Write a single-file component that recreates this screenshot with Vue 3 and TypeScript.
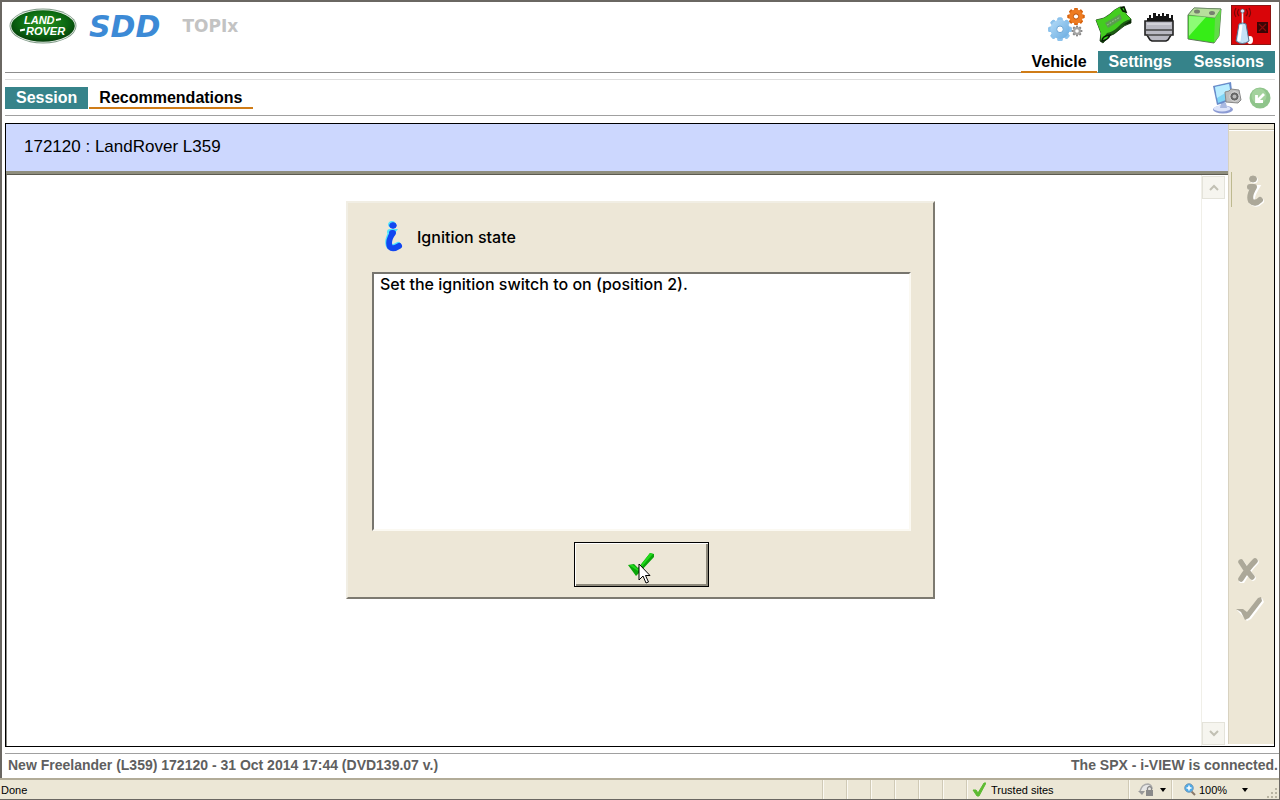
<script setup lang="ts">
import { ref } from 'vue'

interface Tab {
  label: string
  active: boolean
}

const mainTabs: Tab[] = [
  { label: 'Vehicle', active: true },
  { label: 'Settings', active: false },
  { label: 'Sessions', active: false },
]
const sessionTabs: Tab[] = [
  { label: 'Session', active: false },
  { label: 'Recommendations', active: true },
]

const dialogTitle = ref('Ignition state')
const dialogText = ref('Set the ignition switch to on (position 2).')
const emptyCells = 6
const gearTeeth = [0, 45, 90, 135, 180, 225, 270, 315]
</script>

<template>
  <div class="window">
    <header class="masthead">
      <div class="brand">
        <svg class="rover" viewBox="0 0 68 36" role="img" aria-label="Land Rover">
          <defs>
            <radialGradient id="oval" cx="50%" cy="40%" r="60%">
              <stop offset="0" stop-color="#2a9420" />
              <stop offset="0.6" stop-color="#0b6a12" />
              <stop offset="1" stop-color="#043f0a" />
            </radialGradient>
          </defs>
          <ellipse cx="34" cy="18" rx="33.5" ry="17.5" fill="#7f9a87" />
          <ellipse cx="34" cy="18" rx="32.6" ry="16.5" fill="#eef5ee" />
          <ellipse cx="34" cy="18" rx="31.8" ry="15.7" fill="url(#oval)" />
          <text x="15" y="16" class="rover-text">LAND</text>
          <text x="17" y="27" class="rover-text">ROVER</text>
          <path d="M47 12l5-1M11 22.5l5-1" stroke="#fff" stroke-width="1.8" />
        </svg>
        <span class="sdd">SDD</span>
        <a class="topix" href="#topix">TOPIx</a>
      </div>

      <div class="tools">
        <div class="tool-icons">
          <button class="tool gears" type="button" aria-label="Configuration">
            <svg viewBox="0 0 38 34">
              <defs>
                <linearGradient id="blueGear" x1="0" y1="0" x2="1" y2="1">
                  <stop offset="0" stop-color="#b5dcf8" /><stop offset="1" stop-color="#69abe0" />
                </linearGradient>
              </defs>
              <g fill="#8cc2ec">
                <rect v-for="a in gearTeeth" :key="a" x="9.4" y="9.5" width="5.2" height="23.5" rx="1.5" :transform="`rotate(${a} 12 21.3)`" />
              </g>
              <circle cx="12" cy="21.3" r="9.6" fill="url(#blueGear)" />
              <circle cx="12" cy="21.3" r="3.3" fill="#fff" stroke="#6ba7d8" />
              <g fill="#d8640f">
                <rect v-for="a in gearTeeth" :key="a" x="26.3" y="0" width="3.4" height="17" rx="0.8" :transform="`rotate(${a} 28 8.5)`" />
              </g>
              <circle cx="28" cy="8.5" r="6.9" fill="#ee7c22" />
              <circle cx="28" cy="8.5" r="2.6" fill="#fff" stroke="#bd5208" />
              <g fill="#8a8a8a">
                <rect v-for="a in gearTeeth" :key="a" x="28" y="17.8" width="2" height="10.4" :transform="`rotate(${a} 29 23)`" />
              </g>
              <circle cx="29" cy="23" r="3.9" fill="#a4a4a4" />
              <circle cx="29" cy="23" r="1.8" fill="#fff" />
            </svg>
          </button>
          <button class="tool module" type="button" aria-label="Vehicle communication module">
            <svg viewBox="0 0 37 38">
              <path d="M1 14q9-1 14-6 5-5 10-7l4 0 2 7 5 5v4q-7 2-12 7-5 5-10 6L8 37l-3-2 1-8z" fill="#1c5c12" stroke="#0b2c06" stroke-width="0.8" />
              <path d="M1 14q9-1 14-6 5-5 10-7l4 0 2 7 5 5q-8 2-13 8-5 5-11 6l-6 8 0-8z" fill="#43cd20" />
              <path d="M10 17l15-9 2 5-14 9z" fill="#5a9c50" />
              <path d="M12 19l13-8" stroke="#8fb488" stroke-width="1.2" stroke-dasharray="2 1" />
              <path d="M7 35q0-5 8-6-2 5-8 6zM26 2l3-1 2 5-3-1z" fill="#38d51c" stroke="#061b03" stroke-width="1.6" />
              <path d="M28 19l8-5v3z" fill="#0a2607" />
            </svg>
          </button>
          <button class="tool connector" type="button" aria-label="Diagnostic connector">
            <svg viewBox="0 0 30 29">
              <path d="M1 8h28v14h-2l-3 5-2 1H8l-2-1-3-5H1z" fill="#b9b9c2" stroke="#222" stroke-width="1.6" />
              <path d="M2 17h26M3 22h24" stroke="#444" stroke-width="1.3" />
              <path d="M3 8V5h2V2h2v3h2V0h3v3h2V1h2v2h2V0h2v3h2V1h3v4h2V2h2v6z" fill="#151515" />
              <path d="M3 11h24" stroke="#d2d2d8" stroke-width="2" />
            </svg>
          </button>
          <button class="tool battery" type="button" aria-label="Battery">
            <svg viewBox="0 0 35 37">
              <path d="M1 8L7 1l27 1-2 27-5 7L1 32z" fill="#36ed17" stroke="#5c7857" stroke-width="1" />
              <path d="M1 8L7 1l27 1-6 9z" fill="#b8df9c" stroke="#607860" stroke-width="0.6" />
              <path d="M28 11l6-9-2 27-5 7z" fill="#62dc48" />
              <path d="M2 9l17 1L2 29z" fill="#a3ff8d" opacity="0.8" />
              <ellipse cx="10" cy="4.5" rx="3" ry="2" fill="#77806f" />
              <ellipse cx="25" cy="6" rx="3" ry="2" fill="#77806f" />
            </svg>
          </button>
          <button class="tool radio" type="button" aria-label="Wireless link not connected">
            <svg viewBox="0 0 40 40">
              <rect width="40" height="40" fill="#d90509" />
              <rect x="0.5" y="0.5" width="39" height="39" fill="none" stroke="#8d1512" />
              <path d="M8 4q-3 4 0 7M15 4q3 4 0 7M5 3q-3 5 0 9M18 3q3 5 0 9" fill="none" stroke="#760909" stroke-width="1.2" />
              <path d="M11.500 7v12" stroke="#e5f4ff" stroke-width="1.600" />
              <circle cx="11.500" cy="6" r="2" fill="#d5ecff" stroke="#4d5060" stroke-width="0.6" />
              <ellipse cx="19" cy="35" rx="3" ry="4" fill="#fff" />
              <path d="M8 19q4-2 7 0l3 17q-7 5-13 0z" fill="#c5e2f7" stroke="#54738f" stroke-width="1" />
              <path d="M10 20l-2 16" stroke="#fff" stroke-width="3" />
              <rect x="26" y="17" width="11" height="11" fill="#3b0505" />
              <path d="M28 19l7 7M35 19l-7 7" stroke="#8b0b0b" stroke-width="1.2" />
            </svg>
          </button>
        </div>
        <nav class="tabs main-tabs" aria-label="Main">
          <a v-for="tab in mainTabs" :key="tab.label" href="#main" class="tab" :class="{ active: tab.active }">{{ tab.label }}</a>
        </nav>
      </div>
    </header>

    <div class="subbar">
      <nav class="tabs" aria-label="Session">
        <a v-for="tab in sessionTabs" :key="tab.label" href="#session" class="tab" :class="{ active: tab.active }">{{ tab.label }}</a>
      </nav>
      <div class="sub-actions">
        <button class="plain" type="button" aria-label="Capture screen">
          <svg width="30" height="32" viewBox="0 0 30 32">
            <ellipse cx="11" cy="27.500" rx="10" ry="4" fill="#8c9bd3" />
            <ellipse cx="10" cy="26.500" rx="8.500" ry="3" fill="#dde4fa" />
            <path d="M9 21h5l1 5H8z" fill="#a9b8e0" />
            <path d="M1 4L19 0l2 18-16 5z" fill="#6a8cca" />
            <path d="M3 5l14-3 2 14-13 5z" fill="#7fd5f6" />
            <path d="M3 5l14-3 1 6-13 8z" fill="#b9edff" />
            <path d="M13 10l4-1 2-2 8 1 2 10-3 3-12-1z" fill="#bdbdbd" stroke="#888" />
            <circle cx="22.500" cy="14.500" r="4.600" fill="#666" stroke="#e5e5e5" />
            <circle cx="22.500" cy="14.500" r="2" fill="#bbb" />
          </svg>
        </button>
        <button class="plain" type="button" aria-label="Minimise">
          <svg width="22" height="22" viewBox="0 0 22 22">
            <circle cx="11" cy="11" r="10.500" fill="#8fc48b" />
            <circle cx="10" cy="9" r="7.500" fill="#a3d29d" />
            <path d="M15 7L8 14M7.500 8v6.500H14" fill="none" stroke="#fff" stroke-width="2.800" />
          </svg>
        </button>
      </div>
    </div>

    <main class="panel">
      <section class="work">
        <h1 class="vehicle">172120 : LandRover L359</h1>
        <div class="canvas">
          <div class="scrollbar">
            <button class="scroll-btn" type="button" aria-label="Scroll up">
              <svg width="10" height="7" viewBox="0 0 10 7"><path d="M1 6l4-4 4 4" /></svg>
            </button>
            <button class="scroll-btn" type="button" aria-label="Scroll down">
              <svg width="10" height="7" viewBox="0 0 10 7"><path d="M1 1l4 4 4-4" /></svg>
            </button>
          </div>
        </div>
      </section>
      <aside class="side">
        <button class="plain side-info" type="button" aria-label="Information" disabled>
          <svg width="20" height="33" viewBox="0 0 20 33">
            <g transform="translate(1 1)" fill="#fff" stroke="#fff">
              <ellipse cx="7" cy="4" rx="3.500" ry="3" />
              <path d="M4 12h5C6 17 4 22 5 26q4 4 9-1" fill="none" stroke-width="6" stroke-linecap="round" />
            </g>
            <g fill="#aca899" stroke="#aca899">
              <ellipse cx="7" cy="4" rx="3.500" ry="3" />
              <path d="M4 12h4C5 17 3 22 5 26q4 4 9-1" fill="none" stroke-width="6" stroke-linecap="round" stroke-linejoin="round" />
            </g>
          </svg>
        </button>
        <div class="side-end">
          <button class="plain" type="button" aria-label="Cancel" disabled>
            <svg width="24" height="25" viewBox="0 0 24 25">
              <path d="M5 4q4 7 11 15M19 3Q12 10 5 22" transform="translate(1 1)" fill="none" stroke="#fff" stroke-width="5.500" stroke-linecap="round" />
              <path d="M5 4q4 7 11 15M19 3Q12 10 5 21" fill="none" stroke="#aca899" stroke-width="5.500" stroke-linecap="round" />
            </svg>
          </button>
          <button class="plain" type="button" aria-label="Confirm" disabled>
            <svg width="28" height="27" viewBox="0 0 28 27">
              <path d="M0 12h7l4 3L22 1l3-1 2 4-13 17-4 2z" transform="translate(1 1)" fill="#fff" />
              <path d="M0 12h7l4 3L22 1l3-1 1 4-13 17-4 2-4-8z" fill="#aca899" />
            </svg>
          </button>
        </div>
      </aside>
    </main>

    <footer class="session-info">
      <span>New Freelander (L359) 172120 - 31 Oct 2014 17:44 (DVD139.07 v.)</span>
      <span>The SPX - i-VIEW is connected.</span>
    </footer>

    <div class="statusbar">
      <span class="done">Done</span>
      <span v-for="n in emptyCells" :key="n" class="cell"></span>
      <span class="cell zone">
        <svg width="14" height="15" viewBox="0 0 14 15"><path d="M1 8l3 0 2 3L12 1l2 0L7 14H5z" fill="#5dbb32" stroke="#5dbb32" stroke-width="1" /></svg>
        Trusted sites
      </span>
      <button class="cell lock" type="button" aria-label="Protected mode">
        <svg width="17" height="14" viewBox="0 0 17 14">
          <path d="M2 8q2-7 8-7 4 1 4 5" fill="#e6e6e6" stroke="#aaa" stroke-width="1.500" />
          <path d="M0 8h7l-3 4z" fill="#999" />
          <rect x="8" y="7" width="7" height="6" fill="#8a8a8a" />
          <path d="M9.500 7V5q2-3 4 0v2" fill="none" stroke="#888" stroke-width="1.300" />
        </svg>
        <svg width="6" height="4" viewBox="0 0 6 4"><path d="M0 0h6L3 4z" /></svg>
      </button>
      <button class="cell zoom" type="button">
        <svg width="12" height="13" viewBox="0 0 12 13">
          <path d="M7 8l4 4" stroke="#8a7a6a" stroke-width="2" />
          <circle cx="5" cy="5" r="4.300" fill="#4cabe8" stroke="#7d9db8" />
          <path d="M5 2.500v5M2.500 5h5" stroke="#fff" stroke-width="1.500" />
        </svg>
        <span>100%</span>
        <svg class="arrow" width="6" height="4" viewBox="0 0 6 4"><path d="M0 0h6L3 4z" /></svg>
      </button>
      <svg class="grip" width="12" height="12" viewBox="0 0 12 12">
        <path d="M8 1h2v2H8zM4 5h2v2H4zM8 5h2v2H8zM0 9h2v2H0zM4 9h2v2H4zM8 9h2v2H8z" fill="#b8b4a2" />
      </svg>
    </div>

    <div class="dialog" role="dialog" aria-labelledby="dialog-title">
      <div class="dialog-head">
        <svg width="20" height="32" viewBox="0 0 20 32">
          <g transform="translate(-1 -1)" fill="#4de3ff" stroke="#4de3ff">
            <ellipse cx="9" cy="4.500" rx="3.500" ry="3" />
            <path d="M7 12h2C6 16 4 22 6 26q3 3 9-1" fill="none" stroke-width="6" stroke-linecap="round" />
          </g>
          <g fill="#1246f0" stroke="#1246f0">
            <ellipse cx="9" cy="4.500" rx="3.300" ry="2.800" />
            <path d="M8 12h1C6 16 4 22 6 26q3 3 9-1" fill="none" stroke-width="6" stroke-linecap="round" stroke-linejoin="round" />
          </g>
        </svg>
        <h2 id="dialog-title">{{ dialogTitle }}</h2>
      </div>
      <div class="message">{{ dialogText }}</div>
      <button class="confirm" type="button" aria-label="OK">
        <svg width="28" height="26" viewBox="0 0 28 26">
          <path d="M0 13l6-1 4 4L22 1l4 1v3L12 20 8 24z" fill="#0aa50a" />
          <path d="M1 13l4 0 5 4L22 1l3 1L10 19z" fill="#22d91c" />
        </svg>
        <svg class="pointer" width="13" height="21" viewBox="0 0 13 21">
          <path d="M1 1v16l4-4 3 7 2.500-1-3-6.500H12z" fill="#fff" stroke="#000" />
        </svg>
      </button>
    </div>
  </div>
</template>

<style>
body {
  margin: 0;
}
</style>

<style scoped>
.window {
  position: relative;
  box-sizing: border-box;
  display: flex;
  flex-direction: column;
  min-height: 100vh;
  border: solid #6a6762;
  border-width: 2px 1px 1px 2px;
  background: #fff;
  color: #000;
  font-family: "Liberation Sans", Arial, sans-serif;
}
button {
  font: inherit;
  color: inherit;
}
svg {
  display: block;
}
.plain,
.tool {
  padding: 0;
  border: 0;
  background: none;
}
.masthead {
  display: flex;
  justify-content: space-between;
  height: 70px;
  margin: 0 4px 0 3px;
  border-bottom: 1px solid #8e8e8e;
}
.brand {
  display: flex;
  align-items: flex-start;
  padding: 6px 0 0 4px;
}
.rover {
  width: 68px;
  height: 36px;
}
.rover-text {
  fill: #fff;
  font: italic bold 11px "Liberation Sans", Arial, sans-serif;
}
.sdd {
  margin: 2px 0 0 12px;
  color: #3c8ad6;
  font: italic bold 30px/34px "DejaVu Sans", Verdana, sans-serif;
}
.topix {
  margin: 8px 0 0 22px;
  color: #c3c3c3;
  font: bold 17px/20px "DejaVu Sans", Verdana, sans-serif;
  text-decoration: none;
}
.tools {
  display: flex;
  flex-direction: column;
  justify-content: space-between;
  align-items: flex-end;
}
.tool-icons {
  display: flex;
  align-items: center;
  padding: 3px 4px 0 0;
}
.gears { width: 38px; margin-right: 9px; }
.module { width: 37px; margin-right: 12px; }
.connector { width: 30px; margin-right: 13px; }
.battery { width: 35px; margin-right: 9px; }
.radio { width: 40px; }
.connector svg {
  margin-top: 4px;
}
.tabs {
  display: flex;
}
.tab {
  box-sizing: border-box;
  height: 22px;
  padding: 0 11px;
  background: #36838a;
  color: #fff;
  font-size: 16px;
  font-weight: bold;
  line-height: 21px;
  text-decoration: none;
}
.tab.active {
  margin-right: 1px;
  padding: 0 10px;
  border-bottom: 2px solid #cf7c17;
  background: #fff;
  color: #000;
}
.tab + .tab.active {
  margin-left: 1px;
}
.main-tabs {
  margin-bottom: -1px;
}
.subbar {
  display: flex;
  align-items: center;
  justify-content: space-between;
  box-sizing: border-box;
  height: 37px;
  margin: 6px 4px 7px 3px;
  padding-right: 4px;
  border: solid #a0a0a0;
  border-width: 1px 0;
  border-top-color: #dedede;
}
.sub-actions {
  display: flex;
  align-items: center;
  gap: 7px;
}
.panel {
  flex: 1;
  display: flex;
  margin: 0 4px 0 3px;
  border: 1px solid #000;
}
.work {
  flex: 1;
  display: flex;
  flex-direction: column;
}
.vehicle {
  box-sizing: border-box;
  height: 50px;
  margin: 0;
  padding: 0 18px;
  border-bottom: 3px solid #8f8e7e;
  background: #ccd7fe;
  font-size: 17px;
  font-weight: normal;
  line-height: 46px;
}
.canvas {
  flex: 1;
  display: flex;
  justify-content: flex-end;
  border-top: 1px solid #5c5b50;
  border-left: 1px solid #8c8c88;
}
.scrollbar {
  display: flex;
  flex-direction: column;
  justify-content: space-between;
  box-sizing: border-box;
  width: 27px;
  padding: 1px 3px 1px 0;
  border-left: 1px solid #f0efe8;
}
.scroll-btn {
  display: flex;
  align-items: center;
  justify-content: center;
  height: 23px;
  padding: 0;
  border: 1px solid #e4e3da;
  background: #f6f5ef;
}
.scroll-btn path {
  fill: none;
  stroke: #c2c0b4;
  stroke-width: 2;
}
.side {
  display: flex;
  flex-direction: column;
  align-items: flex-start;
  justify-content: space-between;
  box-sizing: border-box;
  width: 46px;
  margin-bottom: 2px;
  padding: 5px 0 120px;
  border-left: 1px solid #d8d2c0;
  background: #ede7d6;
}
.side::before {
  content: "";
  align-self: stretch;
  height: 1px;
  border-top: 1px solid #bdb7a4;
  background: #fff;
}
.side-info {
  display: flex;
  align-items: flex-start;
  box-sizing: border-box;
  height: 35px;
  margin: 41px 0 auto 2px;
  padding: 3px 0 0 14px;
  border-left: 1px solid #bdb98f;
}
.side-end {
  display: flex;
  flex-direction: column;
  gap: 14px;
  padding-left: 7px;
}
.session-info {
  display: flex;
  justify-content: space-between;
  box-sizing: border-box;
  height: 25px;
  margin: 6px 0 0 3px;
  padding: 0 1px 0 3px;
  border-top: 1px solid #a0a0a0;
  color: #5f5f5f;
  font-size: 14px;
  font-weight: bold;
  line-height: 23px;
}
.statusbar {
  display: flex;
  align-items: stretch;
  box-sizing: border-box;
  height: 21px;
  margin-left: -2px;
  border-top: 2px solid #b2ac98;
  background: #ece7d6;
  font-size: 11px;
  line-height: 20px;
}
.done {
  flex: 1;
  padding-left: 1px;
}
.cell {
  box-sizing: border-box;
  width: 24px;
  border: 0;
  border-left: 1px solid #d0cab6;
  background: none;
  box-shadow: inset 1px 0 #fbf9f2;
}
.zone,
.lock,
.zoom {
  display: flex;
  align-items: center;
}
.zone {
  width: 162px;
  gap: 5px;
  padding-left: 5px;
}
.lock {
  width: 43px;
  gap: 5px;
  padding: 0 0 0 9px;
}
.zoom {
  width: 96px;
  gap: 3px;
  padding: 0 0 0 12px;
}
.arrow {
  margin-left: 12px;
}
.grip {
  align-self: flex-end;
}
.dialog {
  position: absolute;
  top: 199px;
  right: 0;
  left: 0;
  box-sizing: border-box;
  display: flex;
  flex-direction: column;
  width: 589px;
  max-width: 100%;
  margin: 0 auto;
  padding: 18px 22px 10px 24px;
  border: 2px solid;
  border-color: #f1eee4 #7d7a70 #7d7a70 #f1eee4;
  background: #ede7d7;
}
.dialog-head {
  display: flex;
  align-items: center;
  gap: 13px;
  height: 32px;
  padding-left: 12px;
}
.dialog-head h2 {
  margin: 0;
  font: 500 16px/20px Inter, Arial, sans-serif;
}
.message {
  box-sizing: border-box;
  min-height: 259px;
  margin-top: 19px;
  padding: 0 6px;
  border: 2px solid;
  border-color: #77756e #fbf9f2 #fbf9f2 #77756e;
  background: #fff;
  font: 500 16px/20px Inter, Arial, sans-serif;
}
.confirm {
  position: relative;
  display: flex;
  align-items: center;
  align-self: center;
  justify-content: center;
  width: 135px;
  height: 45px;
  margin-top: 11px;
  padding: 0;
  border: 1px solid #000;
  background: #ede7d7;
  box-shadow: inset 1px 1px #fff, inset -2px -2px #8d897b;
}
.pointer {
  position: absolute;
  top: 20px;
  left: 63px;
}
</style>
